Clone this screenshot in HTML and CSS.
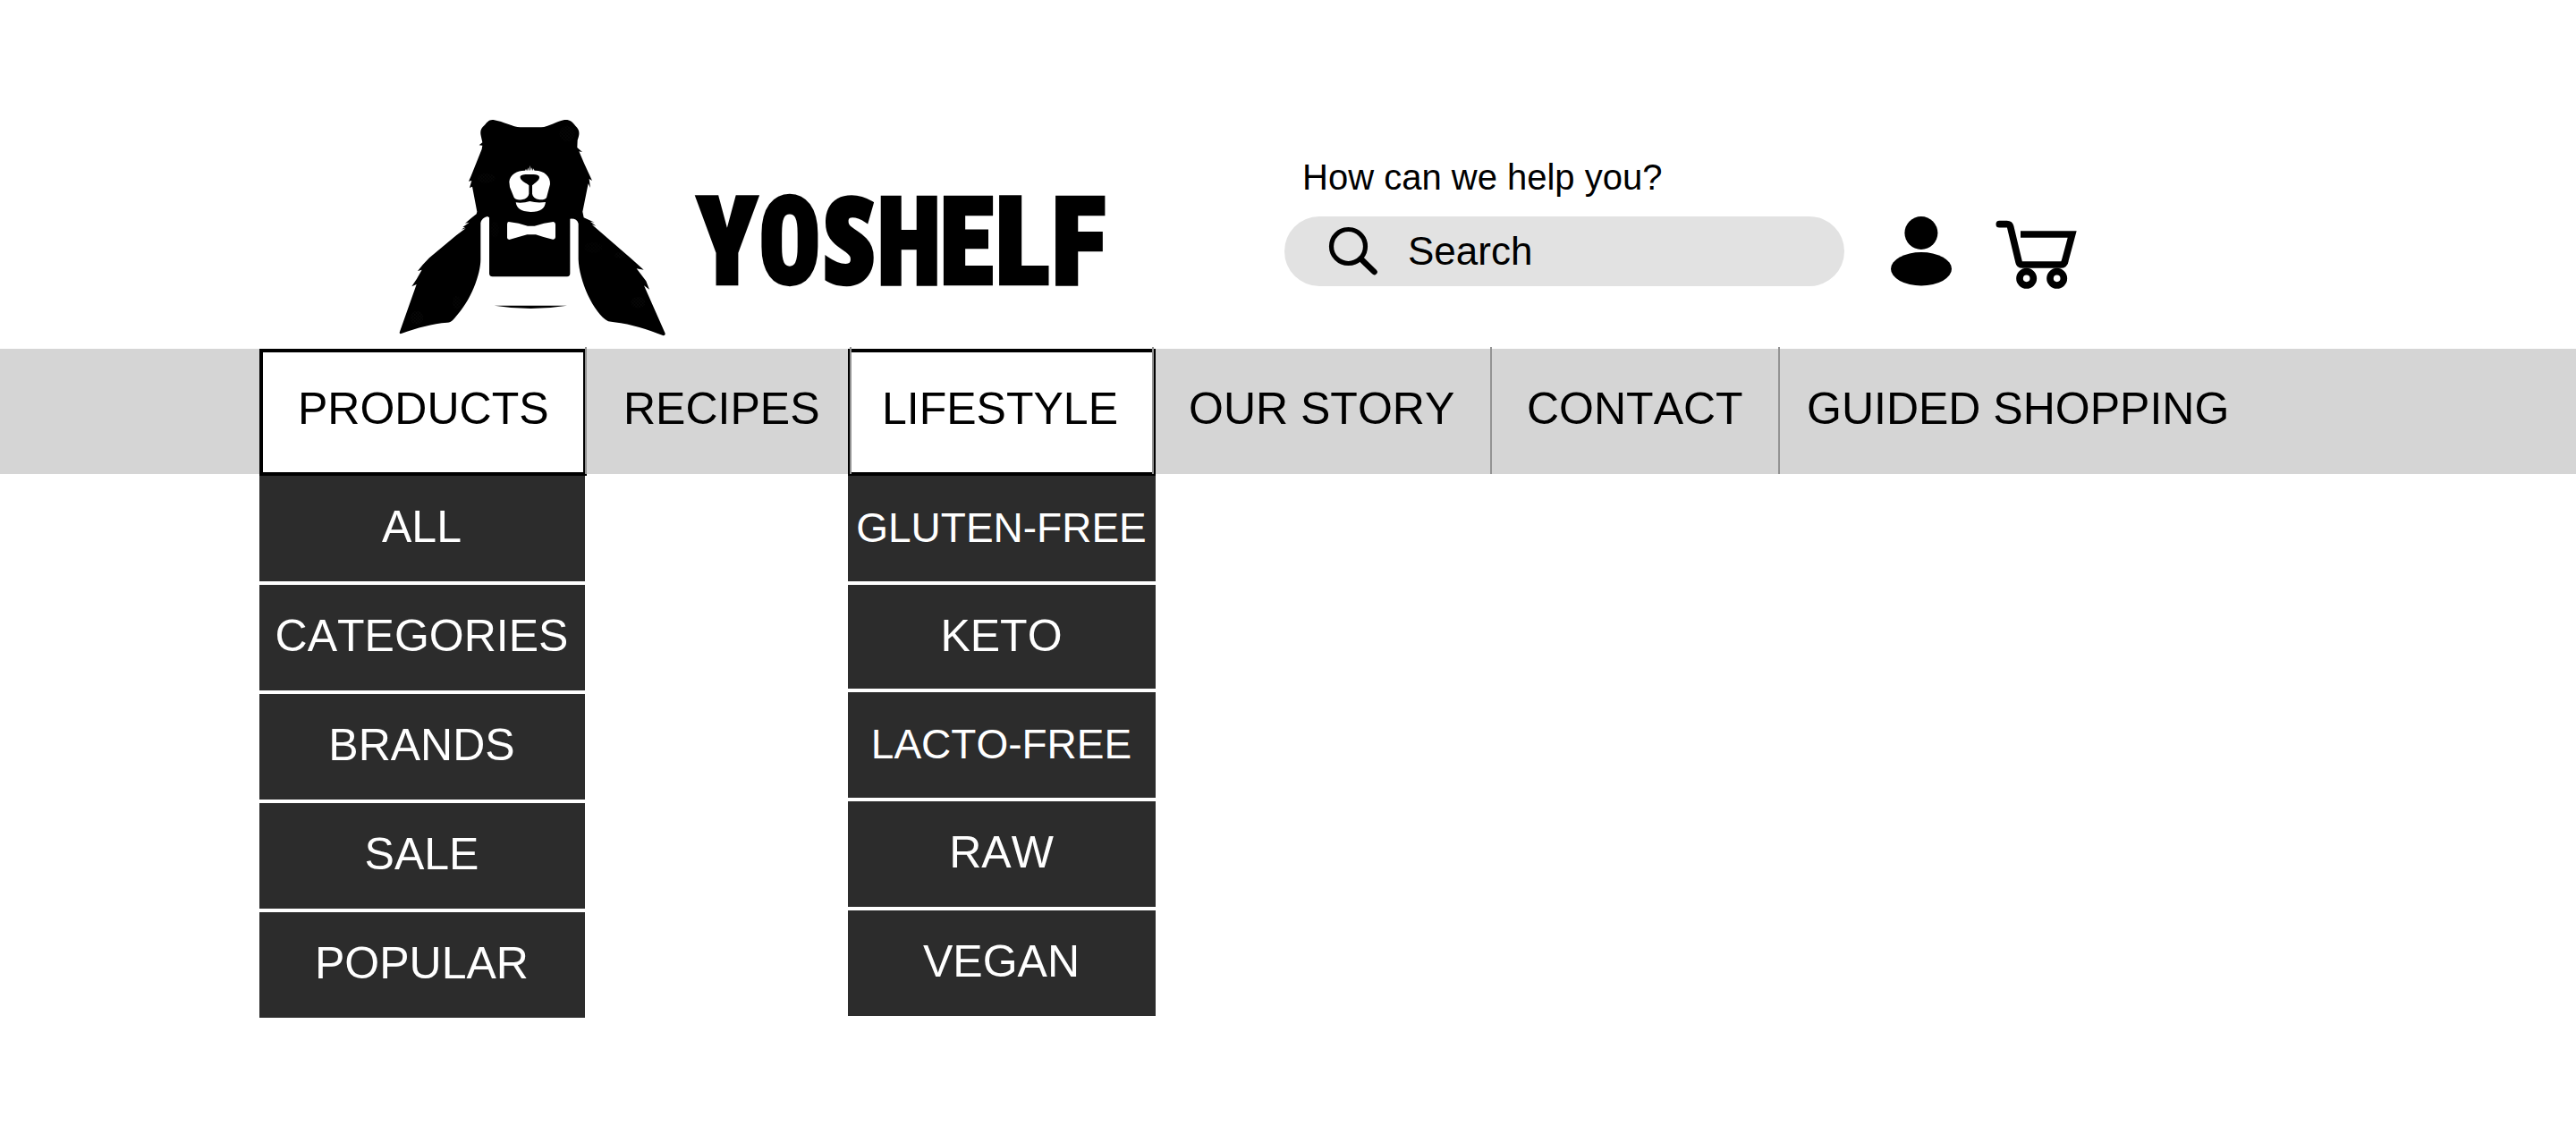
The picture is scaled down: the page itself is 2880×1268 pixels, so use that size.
FILE: index.html
```html
<!DOCTYPE html>
<html lang="en">
<head>
<meta charset="utf-8">
<title>Yoshelf</title>
<link rel="stylesheet" href="styles.css">
</head>
<body>
<header class="header">
  <a class="brand">
    <svg class="bear" viewBox="0 0 990 780" aria-hidden="true">
      <defs>
        <pattern id="grain" width="11" height="11" patternUnits="userSpaceOnUse">
          <circle cx="2.5" cy="2.5" r="1.2" fill="#777"/>
          <circle cx="8" cy="8" r="1.2" fill="#777"/>
        </pattern>
      </defs>
      <path d="M365 42C350 40 344 50 335 60C322 72 320 80 323 95L328 118L317 127L328 128L326 140L290 230L282 248L292 246L285 270L294 266L310 350L308 358L290 372L270 389L284 386L262 402L270 402L257 410L272 406L240 430L150 505L128 528L111 549L125 545L108 575L91 601L107 594L50 755Q50 762 58 758C110 740 160 725 210 722Q222 722 232 710C290 650 322 560 322 510V388Q326 370 345 366L351 370V558Q352 568 362 568H612Q622 567 622 557V374Q645 372 650 390V510C652 580 700 690 750 718L770 721C830 728 880 745 935 766Q942 766 941 758L870 598L888 611L877 583L845 541L869 545L830 510L695 393L709 398L690 383L704 386L668 370L664 350L683 256L690 270L686 240L696 246L670 190L652 148L663 150L646 135L647 110C655 90 655 75 640 62C630 48 620 40 603 42C580 45 550 66 525 67H455C430 66 400 48 365 42Z"/>
      <g fill="url(#grain)">
        <ellipse cx="612" cy="88" rx="26" ry="26" opacity=".5"/>
        <ellipse cx="340" cy="238" rx="30" ry="16" opacity=".5"/>
        <ellipse cx="108" cy="706" rx="22" ry="22" opacity=".6"/>
        <ellipse cx="242" cy="655" rx="14" ry="22" opacity=".4"/>
        <ellipse cx="850" cy="655" rx="24" ry="18" opacity=".6"/>
        <ellipse cx="790" cy="496" rx="18" ry="10" opacity=".5"/>
        <ellipse cx="700" cy="470" rx="30" ry="18" opacity=".3"/>
        <ellipse cx="370" cy="410" rx="14" ry="26" opacity=".3"/>
      </g>
      <g fill="#fff">
        <path d="M418 250C420 225 445 212 470 212H505C535 212 557 232 555 258L543 303Q538 311 520 310Q497 305 495 290V262C505 252 520 245 519 233Q516 226 500 225H472Q452 227 455 236C458 248 475 253 484 262V290Q482 306 460 310Q440 312 434 302L420 268Z"/>
        <path d="M471 214l3-8 3 8zM478 214l3-12 3 12zM485 214l3-19 3 19zM491 214l3-12 3 12zM497 214l3-9 3 9z"/>
        <path d="M440 319Q465 322 487 315Q510 322 540 318C537 340 525 350 490 351C455 350 443 338 440 319Z"/>
        <path d="M416 384Q450 388 480 398H503Q535 388 566 384Q573 385 573 393V436Q572 444 564 443Q535 437 507 427H478Q450 435 418 444Q411 443 411 437V392Q411 385 416 384Z"/>
      </g>
      <path d="M368 665H612Q550 675 490 675Q430 675 368 665Z"/>
    </svg>
    <span class="wordmark"><span class="y">Y</span><span class="o">O</span><span class="s">S</span><span class="h">H</span><span class="e">E</span><span class="l">L</span><span class="f">F</span></span>
  </a>
  <div class="tools">
    <p class="help">How can we help you?</p>
    <div class="tools-row">
      <div class="search">
        <svg class="icon-search" viewBox="0 0 56 54" aria-hidden="true">
          <circle cx="23.5" cy="23.5" r="19" fill="none" stroke="#000" stroke-width="5.2"/>
          <path d="M37.5 37.5L52.5 52" fill="none" stroke="#000" stroke-width="6.6" stroke-linecap="round"/>
        </svg>
        <span class="search-label">Search</span>
      </div>
      <svg class="icon-user" viewBox="0 0 68 78" aria-hidden="true">
        <circle cx="33.9" cy="18.5" r="18.5"/>
        <ellipse cx="34" cy="58.7" rx="34" ry="18.7"/>
      </svg>
      <svg class="icon-cart" viewBox="1050 60 279 252" aria-hidden="true">
        <g fill="none" stroke="#000" stroke-width="23">
          <path stroke-linecap="round" d="M1066 92H1091Q1101 92 1103 101L1131 218Q1133 228 1143 228H1272Q1283 228 1285 219"/>
          <path d="M1284 223L1310 126H1137"/>
          <circle cx="1157" cy="274" r="23"/>
          <circle cx="1259" cy="274" r="23"/>
        </g>
      </svg>
    </div>
  </div>
</header>
<nav class="nav">
  <div class="nav-item products open">
    <a class="nav-link">PRODUCTS</a>
    <ul class="menu">
      <li>ALL</li>
      <li>CATEGORIES</li>
      <li>BRANDS</li>
      <li>SALE</li>
      <li>POPULAR</li>
    </ul>
  </div>
  <div class="nav-item recipes"><a class="nav-link">RECIPES</a></div>
  <div class="nav-item lifestyle open">
    <a class="nav-link">LIFESTYLE</a>
    <ul class="menu">
      <li class="compact">GLUTEN-FREE</li>
      <li class="short">KETO</li>
      <li class="compact">LACTO-FREE</li>
      <li>RAW</li>
      <li>VEGAN</li>
    </ul>
  </div>
  <div class="nav-item story"><a class="nav-link">OUR STORY</a></div>
  <div class="nav-item contact"><a class="nav-link">CONTACT</a></div>
  <div class="nav-item guided"><a class="nav-link">GUIDED SHOPPING</a></div>
</nav>
</body>
</html>
```
FILE: styles.css
```css
* {
  box-sizing: border-box;
}

body {
  min-height: 1268px;
  margin: 0;
  background: #fff;
  color: #000;
  font-family: "Liberation Sans", Arial, sans-serif;
  font-kerning: none;
}

.header {
  display: flex;
  align-items: flex-start;
  height: 390px;
  padding: 120px 0 0 430px;
}

.brand {
  display: flex;
  align-items: flex-start;
}

.bear {
  width: 330px;
  height: 260px;
}

.wordmark {
  display: flex;
  align-items: baseline;
  width: 500px;
  height: 160px;
  margin-top: 71px;
  padding-left: 19.2px;
  font-family: Roboto, sans-serif;
  font-weight: 900;
  font-stretch: 75%;
  font-size: 136px;
  line-height: 160px;
  -webkit-text-stroke: 4.4px #000;
}

/* each letter is fitted to its own width */
.wordmark span {
  flex: none;
  transform-origin: 0 50%;
}

.wordmark .y { width: 70.3px; transform: scaleX(.903); }
.wordmark .o { width: 71.3px; transform: scaleX(.827); }
.wordmark .s {
  width: 60.4px;
  transform: scaleX(.94);
  font-family: "Open Sans", sans-serif;
  font-weight: 800;
  font-size: 133px;
  line-height: 140px;
}
.wordmark .h { width: 69.8px; transform: scaleX(.85); }
.wordmark .e { width: 61.8px; transform: scaleX(.895); }
.wordmark .l { width: 63px; transform: scaleX(.928); }
.wordmark .f { width: 60px; transform: scaleX(.93); }

.tools {
  margin: 52px 0 0 176px;
}

.help {
  margin: 0 0 0 20px;
  font-size: 40px;
  line-height: 52px;
}

.tools-row {
  display: flex;
  align-items: flex-start;
  margin-top: 18px;
}

.search {
  display: flex;
  align-items: flex-start;
  width: 626px;
  height: 78px;
  padding: 10px 0 0 48px;
  border-radius: 39px;
  background: #e2e2e2;
}

.icon-search {
  width: 56px;
  height: 54px;
  overflow: visible;
}

.search-label {
  margin-left: 34px;
  font-size: 44px;
  line-height: 58px;
}

.icon-user {
  width: 68px;
  height: 78px;
  margin-left: 52px;
}

.icon-cart {
  width: 93px;
  height: 84px;
  margin: -2px 0 0 48px;
}

.nav {
  display: flex;
  height: 140px;
  padding-left: 290px;
  background: #d5d5d5;
}

.nav-item {
  position: relative;
  height: 140px;
  font-size: 50px;
}

/* thin rule between entries, rising slightly above the bar */
.nav-item + .nav-item::before {
  content: "";
  position: absolute;
  top: -2px;
  left: -2px;
  z-index: 2;
  width: 2px;
  height: 142px;
  background: #939393;
}

.nav-link {
  display: block;
  height: 140px;
  line-height: 134px;
  white-space: nowrap;
}

.open .nav-link {
  height: 142px;
  border: 4px solid #000;
  background: #fff;
  line-height: 126px;
}

.products { width: 366px; }
.recipes { width: 296px; }
.lifestyle { width: 338px; }
.story { width: 378px; }
.contact { width: 322px; }

.products .nav-link { padding-left: 39px; }
.recipes .nav-link { padding-left: 41px; }
.lifestyle .nav-link {
  width: 344px;
  margin-left: -4px;
  padding-left: 34px;
}
.story .nav-link { padding-left: 39px; }
.contact .nav-link { padding-left: 39px; }
.guided .nav-link { padding-left: 30px; }

.menu {
  display: grid;
  gap: 4px;
  width: 364px;
  margin: 0;
  padding: 0;
  list-style: none;
}

.lifestyle .menu {
  width: 344px;
  margin-left: -4px;
}

.menu li {
  height: 118px;
  padding-right: 1px;
  background: #2c2c2c;
  color: #fff;
  line-height: 114px;
  text-align: center;
}

.menu .short {
  height: 116px;
}

.menu .compact {
  font-size: 46px;
  line-height: 116px;
}
```
